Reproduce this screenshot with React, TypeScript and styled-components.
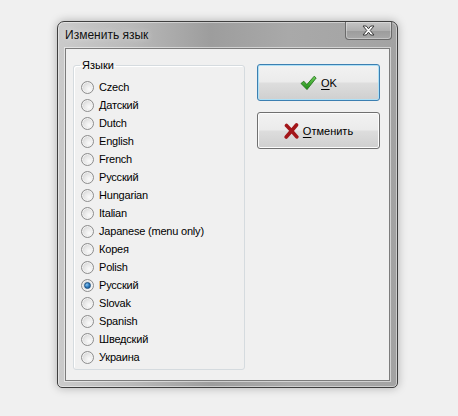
import styled, { createGlobalStyle } from "styled-components";

const GlobalStyle = createGlobalStyle`
    html, body {
        margin: 0;
        background: #f0f0f0;
    }
    body {
        font-family: "Liberation Sans", Arial, sans-serif;
        color: #000;
    }
`;

const Page = styled.div`
    padding: 21px 0 0 57px;
    height: 416px;
    box-sizing: border-box;
`;

const Window = styled.div`
    width: 341px;
    height: 367px;
    box-sizing: border-box;
    display: flex;
    flex-direction: column;
    padding: 0 7px 6px 7px;
    border: 1px solid #3f3f3f;
    border-radius: 7px 7px 5px 5px;
    background: linear-gradient(90deg, #cbcbcb 0%, #b9b9b9 22%, #9d9d9d 45%, #a9a9a9 68%, #a3a3a3 100%);
    box-shadow: inset 0 0 0 1px rgba(255,255,255,0.45), 0 0 10px rgba(0,0,0,0.28);
`;

const TitleBar = styled.div`
    height: 26px;
    display: flex;
    justify-content: space-between;
    align-items: flex-start;
`;

const Title = styled.div`
    font-size: 12px;
    line-height: 26px;
    color: #111;
    text-shadow: 0 0 6px rgba(255,255,255,0.6);
`;

const CloseButton = styled.div`
    width: 47px;
    height: 18px;
    box-sizing: border-box;
    margin-right: -2px;
    display: flex;
    align-items: center;
    justify-content: center;
    border: 1px solid #6a6a6a;
    border-top: none;
    border-radius: 0 0 4px 4px;
    background: linear-gradient(#c4c4c4 0%, #b0b0b0 50%, #9c9c9c 51%, #a8a8a8 100%);
    box-shadow: inset 0 0 0 1px rgba(255,255,255,0.35);
`;

const Client = styled.div`
    flex: 1;
    display: flex;
    gap: 12px;
    padding: 9px 9px 10px 7px;
    background: #f0f0f0;
    border: 1px solid #7c7c7c;
    box-shadow: 0 0 0 1px rgba(255,255,255,0.5);
`;

const Group = styled.fieldset`
    margin: 0;
    width: 172px;
    box-sizing: border-box;
    padding: 6px 0 3px 6px;
    border: 1px solid #d5dbdf;
    border-radius: 3px;
    box-shadow: inset 1px 1px 0 #fff;
    height: 312px;
`;

const Legend = styled.legend`
    padding: 0 2px;
    font-size: 11px;
    line-height: 14px;
`;

const RadioRow = styled.label`
    height: 18px;
    display: flex;
    align-items: center;
    gap: 5px;
    padding-left: 1px;
    font-size: 11px;
    letter-spacing: -0.2px;
`;

const RadioCircle = styled.span<{ $checked: boolean }>`
    width: 13px;
    height: 13px;
    box-sizing: border-box;
    border-radius: 50%;
    border: 1px solid #8d8d8d;
    background: radial-gradient(circle at 65% 65%, #fbfbfb 0%, #e8e8e8 45%, #c6c6c6 100%);
    box-shadow: inset 0 0 0 1px #f3f3f3;
    display: flex;
    align-items: center;
    justify-content: center;
    &::after {
        content: "";
        display: ${(p) => (p.$checked ? "block" : "none")};
        width: 5px;
        height: 5px;
        border-radius: 50%;
        background: radial-gradient(circle at 35% 35%, #8cc6f0 0%, #2f7cc0 50%, #164f86 100%);
        border: 1px solid #1b4f80;
    }
`;

const Buttons = styled.div`
    display: flex;
    flex-direction: column;
    gap: 11px;
    padding-top: 6px;
`;

const Button = styled.div<{ $focused?: boolean }>`
    width: 123px;
    height: 37px;
    box-sizing: border-box;
    display: flex;
    align-items: center;
    justify-content: center;
    gap: 4px;
    font-size: 11px;
    border: 1px solid ${(p) => (p.$focused ? "#3c7fb1" : "#707070")};
    border-radius: 3px;
    background: linear-gradient(#f2f2f2 0%, #ebebeb 48%, #dddddd 52%, #cfcfcf 100%);
    box-shadow: inset 0 0 0 1px ${(p) => (p.$focused ? "#aee0f6" : "#fcfcfc")};
    u {
        text-decoration: underline;
        text-underline-offset: 2px;
    }
`;

const languages = [
    "Czech",
    "Датский",
    "Dutch",
    "English",
    "French",
    "Русский",
    "Hungarian",
    "Italian",
    "Japanese (menu only)",
    "Корея",
    "Polish",
    "Русский",
    "Slovak",
    "Spanish",
    "Шведский",
    "Украина",
];

const CheckIcon = () => (
    <svg width="17" height="16" viewBox="0 0 17 16">
        <defs>
            <linearGradient id="chk" x1="0" y1="0" x2="0" y2="1">
                <stop offset="0" stopColor="#6fd05a" />
                <stop offset="1" stopColor="#1d8a15" />
            </linearGradient>
        </defs>
        <path d="M1 8.5 L3.8 6.2 L6.8 9.6 L14.2 1.2 L16.2 3 L7 14.6 Z" fill="url(#chk)" stroke="#1a6b12" strokeWidth="0.8" strokeLinejoin="round" />
    </svg>
);

const CrossIcon = () => (
    <svg width="15" height="16" viewBox="0 0 15 16">
        <path d="M2.5 2.5 Q7 7 12.8 13.8 M12.5 2 Q8 7.5 2.2 14" stroke="#a3161a" strokeWidth="3.6" strokeLinecap="round" fill="none" />
    </svg>
);

const CloseGlyph = () => (
    <svg width="13" height="11" viewBox="0 0 13 11">
        <path d="M1 1 H4.3 L6.5 3.8 L8.7 1 H12 L8.2 5.5 L12 10 H8.7 L6.5 7.2 L4.3 10 H1 L4.8 5.5 Z" fill="#fff" stroke="#3a3a3a" strokeWidth="1" strokeLinejoin="round" />
    </svg>
);

export default function App() {
    const selected = 11;
    return (
        <>
            <GlobalStyle />
            <Page>
                <Window>
                    <TitleBar>
                        <Title>Изменить язык</Title>
                        <CloseButton>
                            <CloseGlyph />
                        </CloseButton>
                    </TitleBar>
                    <Client>
                        <Group>
                            <Legend>Языки</Legend>
                            {languages.map((lang, i) => (
                                <RadioRow key={i}>
                                    <RadioCircle $checked={i === selected} />
                                    {lang}
                                </RadioRow>
                            ))}
                        </Group>
                        <Buttons>
                            <Button $focused>
                                <CheckIcon />
                                <span><u>O</u>K</span>
                            </Button>
                            <Button>
                                <CrossIcon />
                                <span><u>О</u>тменить</span>
                            </Button>
                        </Buttons>
                    </Client>
                </Window>
            </Page>
        </>
    );
}
